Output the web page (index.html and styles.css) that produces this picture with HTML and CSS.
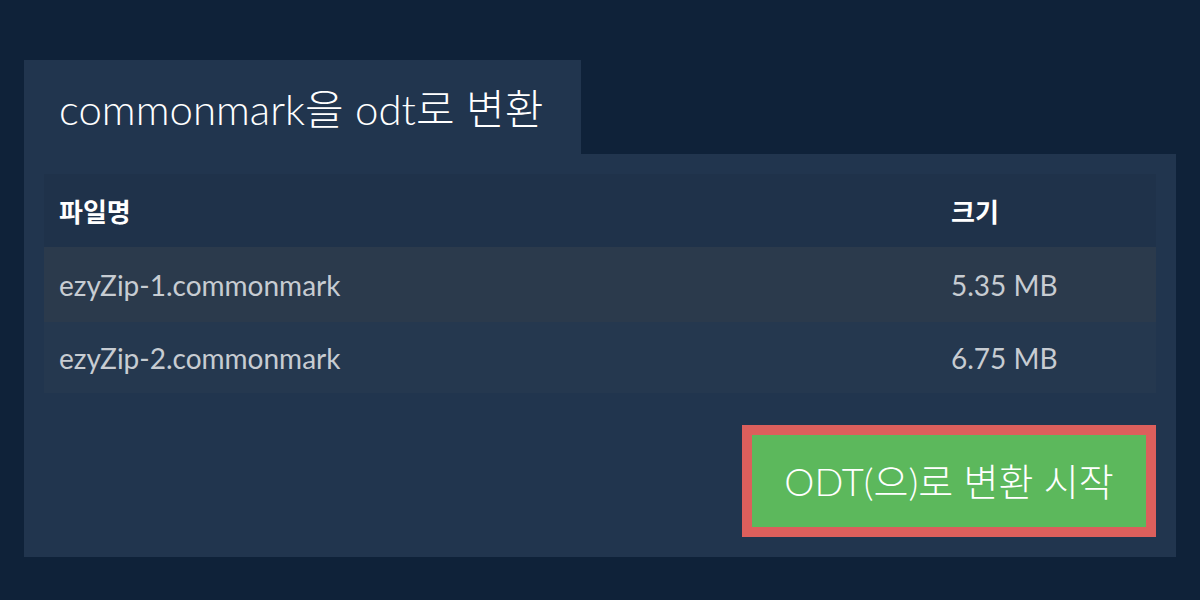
FILE: index.html
```html
<!DOCTYPE html>
<html lang="ko">
<head>
<meta charset="utf-8">
<link rel="stylesheet" href="styles.css">
</head>
<body>
<div class="page">
  <div class="tab"><h1 class="title">commonmark을 odt로 변환</h1></div>
  <div class="panel">
    <div class="table">
      <div class="row head"><div class="name">파일명</div><div class="size">크기</div></div>
      <div class="row odd"><div class="name">ezyZip-1.commonmark</div><div class="size">5.35 MB</div></div>
      <div class="row even"><div class="name">ezyZip-2.commonmark</div><div class="size">6.75 MB</div></div>
    </div>
    <div class="actions">
      <button class="convert">ODT(으)로 변환 시작</button>
    </div>
  </div>
</div>
</body>
</html>
```
FILE: styles.css
```css
html, body {
  margin: 0;
  padding: 0;
  background: #0f2239;
}
body {
  font-family: "Lato", "Noto Sans CJK KR", sans-serif;
  width: 1200px;
  height: 600px;
  overflow: hidden;
}
.page {
  padding: 60px 24px 0 24px;
}
.tab {
  width: 557px;
  height: 94px;
  background: #21354e;
  box-sizing: border-box;
  padding-left: 35px;
  display: flex;
  align-items: center;
}
.title {
  margin: 0;
  font-weight: 300;
  font-size: 42px;
  color: #ffffff;
  padding-bottom: 2px;
}
.panel {
  width: 1152px;
  box-sizing: border-box;
  background: #21354e;
  padding: 20px;
}
.table {
  display: flex;
  flex-direction: column;
}
.row {
  display: flex;
  align-items: center;
  padding: 0 15px;
  color: #c7ccd2;
  font-size: 28px;
}
.row .name { flex: 1; }
.row .size { width: 190px; }
.head {
  height: 73px;
  background: #1f324a;
  color: #ffffff;
  font-weight: 700;
  font-size: 26px;
}
.odd {
  height: 75px;
  background: #2b3a4c;
}
.even {
  height: 71px;
  background: #25384f;
}
.actions {
  display: flex;
  justify-content: flex-end;
  padding-top: 32px;
}
.convert {
  width: 414px;
  height: 112px;
  box-sizing: border-box;
  border: 10px solid #dc5f5c;
  background: #5cb85c;
  color: #ffffff;
  font-family: "Lato", "Noto Sans CJK KR", sans-serif;
  font-weight: 300;
  font-size: 38px;
  padding: 0 0 4px 0;
  cursor: pointer;
}
```
